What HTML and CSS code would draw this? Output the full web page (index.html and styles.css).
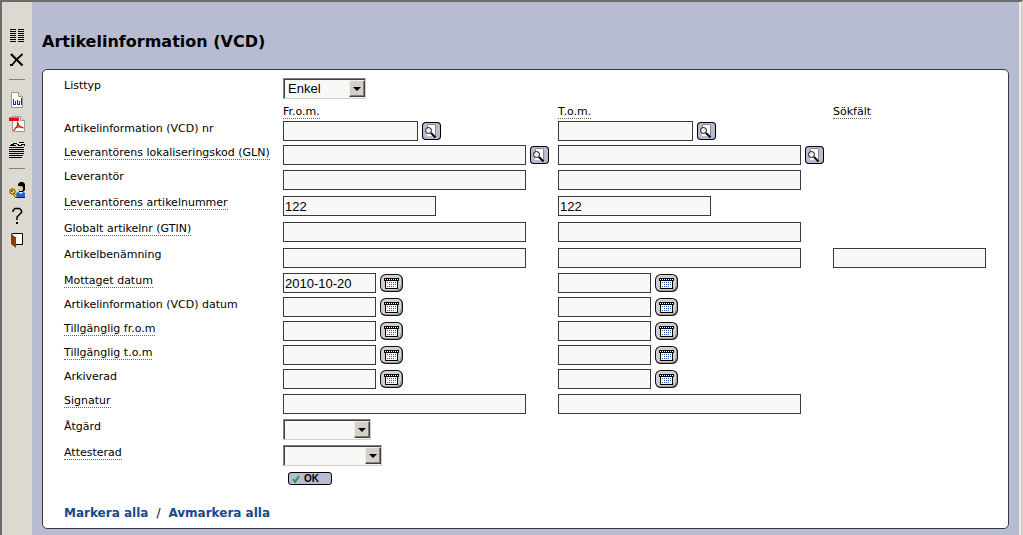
FILE: index.html
```html
<!DOCTYPE html>
<html lang="sv">
<head>
<meta charset="utf-8">
<title>Artikelinformation (VCD)</title>
<link rel="stylesheet" href="styles.css">
</head>
<body>
<svg class="sprite" aria-hidden="true">
  <symbol id="search" viewBox="0 0 19 18">
    <path d="M5 2h9v12H5z" fill="#fff"/>
    <path d="M5.500 6V2.500h8V14" fill="none" stroke="#888"/>
    <circle cx="6.500" cy="8.500" r="3" fill="#eee" stroke="#111"/>
    <path d="M9 11l4.500 4.500" stroke="#000" stroke-width="2"/>
  </symbol>
  <symbol id="calendar" viewBox="0 0 23 18">
    <path d="M5 5h13v10H5z" fill="#000"/>
    <path d="M6 7h11v7H6z" fill="#fff"/>
    <path d="M4 4h15v3H4z" fill="#000"/>
    <path d="M5 5.500h13" stroke="#fff" stroke-dasharray="1 1"/>
    <path d="M7 8.500h9M9 10.500h7M7 12.500h7" stroke="#2452a8" stroke-dasharray="1 1"/>
  </symbol>
</svg>
<div class="app">
  <nav class="toolbar" aria-label="Verktyg">
    <button type="button" aria-label="Lista"><svg viewBox="0 0 16 24" shape-rendering="crispEdges"><path d="M1 5.500h6m2 0h6M1 7.500h6m2 0h6M1 9.500h6m2 0h6M1 11.500h6m2 0h6M1 13.500h6m2 0h6M1 15.500h6m2 0h6M1 17.500h6m2 0h6" stroke="#000"/></svg></button>
    <button type="button" aria-label="Rensa"><svg viewBox="0 0 16 24"><path d="M2 6l11.500 11.500" stroke="#000" stroke-width="2.200"/><path d="M13.500 6L8 11l-5 6" fill="none" stroke="#000" stroke-width="1.800"/><path d="M1 16h3v2H1z"/></svg></button>
    <hr>
    <button type="button" aria-label="Dokument"><svg viewBox="0 0 16 24"><path d="M2.500 3.500h7l4 4v11h-11z" fill="#fff" stroke="#999"/><path d="M9.500 3.500v4h4" fill="#ddd" stroke="#999"/><path d="M4.500 10v6M6.500 12v4M8.500 11v5M10.500 12v4M12.500 9v7M5 15.500h1M9 15.500h1" fill="none" stroke="#1a22d0" shape-rendering="crispEdges"/></svg></button>
    <button type="button" aria-label="PDF"><svg viewBox="0 0 16 24"><path d="M3.500 3.500h8l4 4v11h-12z" fill="#f8f8f8" stroke="#999"/><path d="M11.500 3.500v4h4" fill="#ddd" stroke="#999"/><path d="M0 4.500h10V8H0z" fill="#e01010"/><path d="M8.500 9c1 4-1 6-4 8.500M9 10c0 2 2 4 5.500 5M6 15c2-1 5-1.500 8-.5" fill="none" stroke="#d41212" stroke-width="1.300"/></svg></button>
    <button type="button" aria-label="Arkiv"><svg viewBox="0 0 16 24"><path d="M4 5.500h11l-1 4H1z" fill="#e8e8e8"/><g fill="none" stroke="#000" shape-rendering="crispEdges"><path d="M4 6.500h4m2-1h5M2 7.500h3m3 0h2m2 0h3M1 8.500h6m2 0h4"/><path d="M0 10.500h15M0 12.500h15M0 14.500h15M0 16.500h15M0 18.500h14M0 20.500h13M15.500 7v2"/></g></svg></button>
    <hr>
    <button type="button" aria-label="Behörighet"><svg viewBox="0 0 16 24"><path d="M9 6l2-2h3l2 2v6l-2 2h-4z" fill="#000"/><path d="M9 8h3l2 1v3l-1 1h-3l-1-2z" fill="#e8c39a"/><path d="M7 15l3-1 2 2 2-2 2 1v4H8z" fill="#1769e0"/><path d="M7 19.500h9" stroke="#071a66"/><path d="M10 14h3l-1 2z" fill="#fff"/><circle cx="3.500" cy="13.500" r="2.700" fill="#ffd21c" stroke="#5d4300"/><path d="M5 15l3 3v1.500H6L4.500 16.500z" fill="#ffd21c" stroke="#5d4300" stroke-width=".8"/><circle cx="3" cy="13" r="1" fill="#5d4300"/></svg></button>
    <button type="button" aria-label="Hjälp"><svg viewBox="0 0 16 24"><path d="M4 10V8.500L6 6.500h4.500l2 2v2L8 15v3" fill="none" stroke="#000" stroke-width="1.500"/><path d="M7 20h2v2H7z"/></svg></button>
    <button type="button" aria-label="Avsluta"><svg viewBox="0 0 16 24"><path d="M3.500 7.500h10v11h-10z" fill="#fff" stroke="#000"/><path d="M2 7l5 4v11l-5-4z" fill="#8a3c08"/><path d="M3 8h4v3l-1 0z" fill="#fff"/></svg></button>
  </nav>
  <main class="content">
    <h1>Artikelinformation (VCD)</h1>
    <form class="panel">
      <div class="row choice">
        <label for="typ">Listtyp</label>
        <span class="cell"><span class="pick pick-s"><select id="typ"><option>Enkel</option></select><i></i></span></span>
      </div>
      <div class="row head">
        <span></span><span><span class="tip">Fr.o.m.</span></span><span><span class="tip">T.o.m.</span></span><span><span class="tip">Sökfält</span></span>
      </div>
      <div class="row tight">
        <label for="nr">Artikelinformation (VCD) nr</label>
        <span class="cell"><input id="nr" class="w-nr"><button type="button" class="find" aria-label="Sök"><svg><use href="#search"/></svg></button></span>
        <span class="cell"><input aria-label="Nr t.o.m." class="w-nr"><button type="button" class="find" aria-label="Sök"><svg><use href="#search"/></svg></button></span>
      </div>
      <div class="row tight">
        <label for="gln"><span class="tip">Leverantörens lokaliseringskod (GLN)</span></label>
        <span class="cell"><input id="gln" class="w-full"><button type="button" class="find" aria-label="Sök"><svg><use href="#search"/></svg></button></span>
        <span class="cell"><input aria-label="GLN t.o.m." class="w-full"><button type="button" class="find" aria-label="Sök"><svg><use href="#search"/></svg></button></span>
      </div>
      <div class="row">
        <label for="lev">Leverantör</label>
        <span class="cell"><input id="lev" class="w-full"></span>
        <span class="cell"><input aria-label="Leverantör t.o.m." class="w-full"></span>
      </div>
      <div class="row">
        <label for="art"><span class="tip">Leverantörens artikelnummer</span></label>
        <span class="cell"><input id="art" class="w-art" value="122"></span>
        <span class="cell"><input aria-label="Artikelnummer t.o.m." class="w-art" value="122"></span>
      </div>
      <div class="row">
        <label for="gtin"><span class="tip">Globalt artikelnr (GTIN)</span></label>
        <span class="cell"><input id="gtin" class="w-full"></span>
        <span class="cell"><input aria-label="GTIN t.o.m." class="w-full"></span>
      </div>
      <div class="row">
        <label for="ben">Artikelbenämning</label>
        <span class="cell"><input id="ben" class="w-full"></span>
        <span class="cell"><input aria-label="Artikelbenämning t.o.m." class="w-full"></span>
        <span class="cell"><input aria-label="Artikelbenämning sökfält" class="w-art"></span>
      </div>
      <div class="row tight">
        <label for="mot"><span class="tip">Mottaget datum</span></label>
        <span class="cell"><input id="mot" class="w-date" value="2010-10-20"><button type="button" class="cal" aria-label="Kalender"><svg><use href="#calendar"/></svg></button></span>
        <span class="cell"><input aria-label="Mottaget t.o.m." class="w-date"><button type="button" class="cal" aria-label="Kalender"><svg><use href="#calendar"/></svg></button></span>
      </div>
      <div class="row tight">
        <label for="dat">Artikelinformation (VCD) datum</label>
        <span class="cell"><input id="dat" class="w-date"><button type="button" class="cal" aria-label="Kalender"><svg><use href="#calendar"/></svg></button></span>
        <span class="cell"><input aria-label="Datum t.o.m." class="w-date"><button type="button" class="cal" aria-label="Kalender"><svg><use href="#calendar"/></svg></button></span>
      </div>
      <div class="row tight">
        <label for="tfr"><span class="tip">Tillgänglig fr.o.m</span></label>
        <span class="cell"><input id="tfr" class="w-date"><button type="button" class="cal" aria-label="Kalender"><svg><use href="#calendar"/></svg></button></span>
        <span class="cell"><input aria-label="Tillgänglig fr.o.m, t.o.m." class="w-date"><button type="button" class="cal" aria-label="Kalender"><svg><use href="#calendar"/></svg></button></span>
      </div>
      <div class="row tight">
        <label for="ttm"><span class="tip">Tillgänglig t.o.m</span></label>
        <span class="cell"><input id="ttm" class="w-date"><button type="button" class="cal" aria-label="Kalender"><svg><use href="#calendar"/></svg></button></span>
        <span class="cell"><input aria-label="Tillgänglig t.o.m, t.o.m." class="w-date"><button type="button" class="cal" aria-label="Kalender"><svg><use href="#calendar"/></svg></button></span>
      </div>
      <div class="row tight">
        <label for="ark">Arkiverad</label>
        <span class="cell"><input id="ark" class="w-date"><button type="button" class="cal" aria-label="Kalender"><svg><use href="#calendar"/></svg></button></span>
        <span class="cell"><input aria-label="Arkiverad t.o.m." class="w-date"><button type="button" class="cal" aria-label="Kalender"><svg><use href="#calendar"/></svg></button></span>
      </div>
      <div class="row">
        <label for="sig"><span class="tip">Signatur</span></label>
        <span class="cell"><input id="sig" class="w-full"></span>
        <span class="cell"><input aria-label="Signatur t.o.m." class="w-full"></span>
      </div>
      <div class="row choice">
        <label for="atg">Åtgärd</label>
        <span class="cell"><span class="pick pick-m"><select id="atg"><option></option></select><i></i></span></span>
      </div>
      <div class="row choice">
        <label for="att"><span class="tip">Attesterad</span></label>
        <span class="cell"><span class="pick pick-l"><select id="att"><option></option></select><i></i></span></span>
      </div>
      <div class="row submit">
        <span></span>
        <span class="cell"><button type="button" class="ok"><svg viewBox="0 0 8 8" aria-hidden="true"><path d="M1 4l2 3 4-6" fill="none" stroke="#2f9a3c" stroke-width="2"/></svg>OK</button></span>
      </div>
      <p class="links"><a href="#">Markera alla</a><span>/</span><a href="#">Avmarkera alla</a></p>
    </form>
  </main>
</div>
</body>
</html>
```
FILE: styles.css
```css
* { box-sizing: border-box; }

body {
  margin: 0;
  background: #b7bcd3;
  color: #000;
  font: 11px/13px Verdana, "DejaVu Sans", sans-serif;
}

.sprite { display: none; }

.app {
  display: flex;
  min-height: 100vh;
  border-top: 2px solid #6b6b6b;
  border-left: 2px solid #6b6b6b;
  border-right: 2px solid #d4d0c8;
}

.toolbar {
  display: flex;
  flex-direction: column;
  flex: none;
  width: 30px;
  padding: 22px 7px 0;
  background: #dcd9d1;
}

.toolbar button {
  height: 24px;
  padding: 0;
  border: 0;
  background: none;
}

.toolbar svg { display: block; width: 16px; height: 24px; }

.toolbar hr {
  width: 16px;
  height: 1px;
  margin: 7px 0 9px;
  border: 0;
  background: #808080;
}

.content {
  flex: 1;
  padding: 0 10px 6px;
  border-right: 2px solid #eceae6;
}

h1 {
  margin: 0;
  padding: 30px 0 17px;
  font-size: 16px;
  line-height: 20px;
}

.panel {
  padding: 6px 21px;
  border: 1px solid #3a3a3a;
  border-radius: 5px;
  background: #fff;
}

.row {
  display: grid;
  grid-template-columns: 219px 275px 275px 1fr;
  align-items: start;
  min-height: 26px;
  padding-top: 3px;
  white-space: nowrap;
}

.row.tight { min-height: 24px; padding-top: 2px; }
.row.tight label { padding-top: 1px; }
.row.choice { padding-top: 2px; }
.row.choice label { padding-top: 1px; }
.row.head { min-height: 17px; }

.tip {
  display: inline-block;
  border-bottom: 1px dotted #666;
}

.row.head .tip { display: block; width: max-content; }

.cell {
  display: flex;
  align-items: center;
  gap: 4px;
}

input {
  height: 20px;
  padding: 0 1px;
  border: 1px solid #3a3a3a;
  border-radius: 0;
  background: #f9f8f6;
  font: 13px "Liberation Sans", Arial, sans-serif;
}

.w-nr { width: 135px; }
.w-full { width: 243px; }
.w-art { width: 153px; }
.w-date { width: 93px; }

.find, .cal {
  flex: none;
  height: 18px;
  padding: 0;
  border: 0;
}

.find {
  width: 19px;
  border-radius: 4px;
  background: #b7bcd3;
  box-shadow: inset 0 0 0 1px #000;
}

.cal {
  width: 23px;
  border-radius: 6px;
  background: #d0d1d6;
  box-shadow: inset 0 0 0 1px #111, inset -2px -2px 0 #999ca3;
}

.find svg, .cal svg { display: block; width: 100%; height: 18px; }

.pick {
  position: relative;
  display: block;
  height: 21px;
}

.pick-s { width: 83px; }
.pick-m { width: 88px; }
.pick-l { width: 99px; }

select {
  appearance: none;
  width: 100%;
  height: 21px;
  padding: 0 4px;
  border: 1px solid;
  border-color: #808080 #d4d0c8 #d4d0c8 #808080;
  border-radius: 0;
  background: #f9f8f6;
  box-shadow: inset 1px 1px 0 #404040;
  font: 13px "Liberation Sans", Arial, sans-serif;
}

.pick i {
  position: absolute;
  top: 2px;
  right: 1px;
  display: grid;
  place-items: center;
  width: 16px;
  height: 17px;
  border: 1px solid;
  border-color: #eee #404040 #404040 #eee;
  background: #d4d0c8;
  box-shadow: inset -1px -1px 0 #808080;
  pointer-events: none;
}

.pick i::before {
  content: "";
  border: 4px solid transparent;
  border-top-color: #000;
  border-bottom: 0;
}

.ok {
  display: flex;
  align-items: center;
  gap: 4px;
  width: 44px;
  height: 13px;
  margin-left: 5px;
  padding: 0 3px;
  border: 1px solid #000;
  border-radius: 3px;
  background: #b7bcd3;
  color: #000;
  font: bold 10px/11px "Liberation Sans", Arial, sans-serif;
}

.ok svg { width: 8px; height: 8px; }

.links {
  display: flex;
  gap: 8px;
  margin: 12px 0 0;
  padding-bottom: 2px;
  font-size: 12px;
  font-weight: bold;
}

.links span { font-weight: normal; }
.links a { color: #134a8e; text-decoration: none; }
```
